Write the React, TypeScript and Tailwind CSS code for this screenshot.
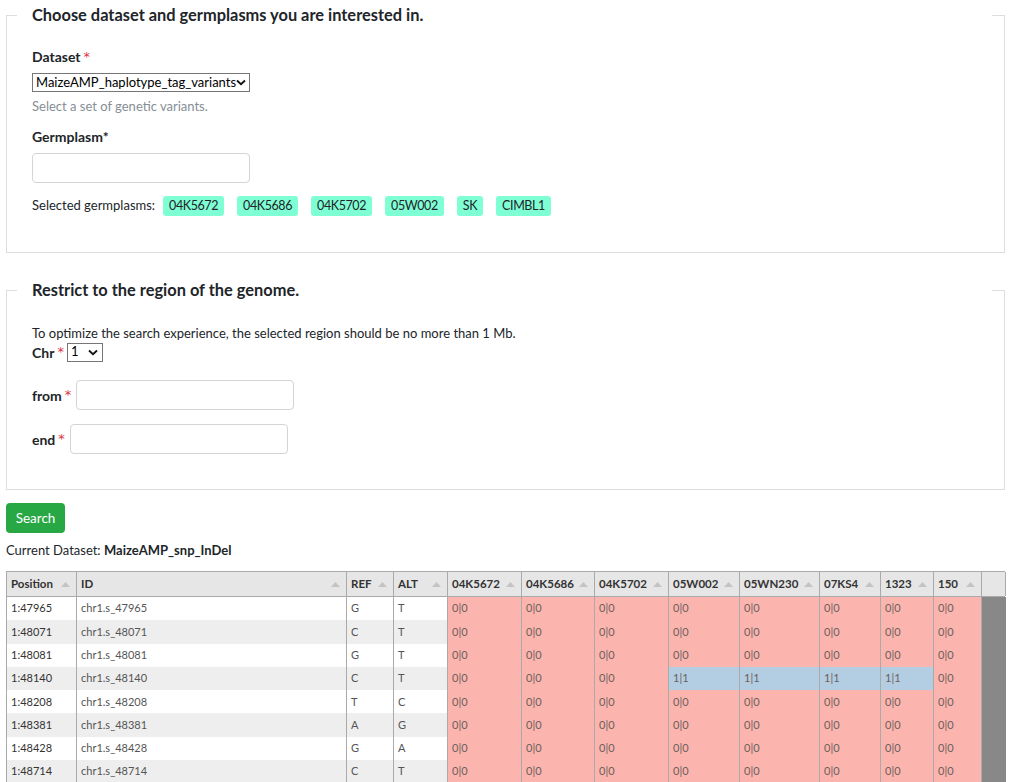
import React from "react";

const germplasms = ["04K5672", "04K5686", "04K5702", "05W002", "SK", "CIMBL1"];

const columns = [
  "Position",
  "ID",
  "REF",
  "ALT",
  "04K5672",
  "04K5686",
  "04K5702",
  "05W002",
  "05WN230",
  "07KS4",
  "1323",
  "150",
];

const rows = [
  { pos: "1:47965", ref: "G", alt: "T", hit: false },
  { pos: "1:48071", ref: "C", alt: "T", hit: false },
  { pos: "1:48081", ref: "G", alt: "T", hit: false },
  { pos: "1:48140", ref: "C", alt: "T", hit: true },
  { pos: "1:48208", ref: "T", alt: "C", hit: false },
  { pos: "1:48381", ref: "A", alt: "G", hit: false },
  { pos: "1:48428", ref: "G", alt: "A", hit: false },
  { pos: "1:48714", ref: "C", alt: "T", hit: false },
];

const gridCols =
  "grid grid-cols-[70px_270px_47px_54px_74px_73px_74px_71px_80px_61px_53px_48px_24px]";

function Chevron() {
  return (
    <svg width="10" height="7" viewBox="0 0 10 7" className="shrink-0">
      <path d="M1 1.5 L5 5.2 L9 1.5" fill="none" stroke="#111" strokeWidth="1.8" />
    </svg>
  );
}

function SortArrow() {
  return (
    <svg width="9" height="5" viewBox="0 0 9 5" className="shrink-0">
      <path d="M0 5 L4.5 0 L9 5 Z" fill="#c4c4c4" />
    </svg>
  );
}

function Req() {
  return (
    <span className="text-[#dc3545] ml-[3px] text-[13px] font-normal font-['DejaVu_Sans',sans-serif]">
      *
    </span>
  );
}

function Box({ title, children }: { title: string; children: React.ReactNode }) {
  return (
    <fieldset className="border border-[#dedede] px-[10px] w-[999px]">
      <legend className="w-[975px] px-[15px] text-[16.4px] leading-[22px] font-bold text-[#212529]">
        {title}
      </legend>
      <div className="pl-[15px]">{children}</div>
    </fieldset>
  );
}

function TextInput({ w }: { w: string }) {
  return <div className={`${w} h-[30px] border border-[#d4d4d4] rounded-[4px] bg-white`} />;
}

export default function App() {
  return (
    <div
      className="bg-white min-h-[782px] pl-[6px] pt-[4px] text-[#212529] text-[13px]"
      style={{ fontFamily: "Lato, 'Liberation Sans', sans-serif" }}
    >
      <Box title="Choose dataset and germplasms you are interested in.">
        <div className="mt-[21px] text-[14px] leading-[20px] font-bold flex items-center">
          Dataset
          <Req />
        </div>
        <div className="mt-[6px] w-[218px] h-[19px] border border-[#767676] flex items-center justify-between pl-[3px] pr-[4px] text-[13px] text-black">
          <span>MaizeAMP_haplotype_tag_variants</span>
          <Chevron />
        </div>
        <div className="mt-[5px] leading-[18px] text-[#868e96]">Select a set of genetic variants.</div>
        <div className="mt-[12px] text-[14px] leading-[20px] font-bold">Germplasm*</div>
        <div className="mt-[6px]">
          <TextInput w="w-[218px]" />
        </div>
        <div className="mt-[13px] flex items-center h-[20px]">
          <span className="mr-[8px]">Selected germplasms:</span>
          <div className="flex gap-[13px]">
            {germplasms.map((g) => (
              <span
                key={g}
                className="bg-[#7fffd4] rounded-[3px] px-[6px] h-[20px] leading-[20px] text-[12.5px] tracking-[-0.4px]"
              >
                {g}
              </span>
            ))}
          </div>
        </div>
        <div className="h-[36px]" />
      </Box>

      <div className="h-[26px]" />

      <Box title="Restrict to the region of the genome.">
        <div className="mt-[23px] leading-[18px]">
          To optimize the search experience, the selected region should be no more than 1 Mb.
        </div>
        <div className="flex items-center h-[20px]">
          <span className="text-[14px] font-bold">Chr</span>
          <Req />
          <div className="ml-[3px] w-[36px] h-[19px] border border-[#767676] flex items-center justify-between pl-[3px] pr-[4px] text-[13px] text-black">
            <span>1</span>
            <Chevron />
          </div>
        </div>
        <div className="mt-[18px] flex items-center">
          <span className="text-[14px] font-bold">from</span>
          <Req />
          <div className="ml-[5px]">
            <TextInput w="w-[218px]" />
          </div>
        </div>
        <div className="mt-[14px] flex items-center">
          <span className="text-[14px] font-bold">end</span>
          <Req />
          <div className="ml-[5px]">
            <TextInput w="w-[218px]" />
          </div>
        </div>
        <div className="h-[35px]" />
      </Box>

      <button className="mt-[13px] h-[30px] w-[59px] rounded-[4px] bg-[#28a745] text-white text-[13.5px]">
        Search
      </button>
      <div className="mt-[8px] leading-[18px]">
        Current Dataset: <span className="font-bold">MaizeAMP_snp_InDel</span>
      </div>

      <div className="mt-[12px] w-[999px] border-l border-t border-[#aaa] text-[11px]">
        <div className={`${gridCols} h-[25px] bg-[#e6e6e6] border-b border-[#aaa]`}>
          {columns.map((c) => (
            <div
              key={c}
              className="border-r border-[#aaa] flex items-center justify-between pl-[4px] pr-[6px] font-bold text-[#333] text-[11.5px]"
            >
              <span>{c}</span>
              <SortArrow />
            </div>
          ))}
          <div className="border-r border-[#aaa]" />
        </div>
        {rows.map((r, i) => {
          const stripe = i % 2 === 1 ? "bg-[#eeeeee]" : "bg-white";
          const id = "chr1.s_" + r.pos.slice(2);
          return (
            <div key={r.pos} className={`${gridCols} h-[23.3px]`}>
              {[r.pos, id, r.ref, r.alt].map((v, k) => (
                <div
                  key={k}
                  className={`${stripe} border-r border-[#aaa] pl-[4px] flex items-center ${
                    k === 0 ? "text-[#333]" : "text-[#555]"
                  }`}
                >
                  {v}
                </div>
              ))}
              {columns.slice(4).map((c, k) => {
                const blue = r.hit && k >= 3 && k <= 6;
                return (
                  <div
                    key={c}
                    className={`${
                      blue ? "bg-[#b3cde3]" : "bg-[#fbb4ae]"
                    } border-r border-[#aaa] pl-[4px] flex items-center text-[#6b5f5c]`}
                  >
                    {blue ? "1|1" : "0|0"}
                  </div>
                );
              })}
              <div className="bg-[#888]" />
            </div>
          );
        })}
      </div>
    </div>
  );
}
